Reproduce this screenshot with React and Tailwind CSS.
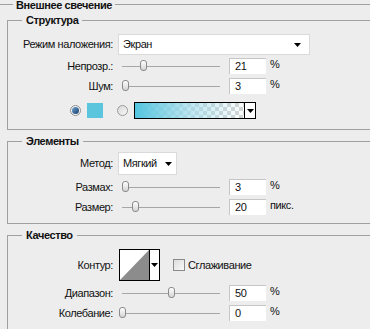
import React from "react";

function Arrow({ className = "" }) {
  return (
    <svg width="7" height="4" viewBox="0 0 7 4" className={className}>
      <polygon points="0,0 7,0 3.5,4" fill="#000" />
    </svg>
  );
}

function Group({ title, className, children }) {
  return (
    <div className={"ml-[7px] border-l border-t border-b border-[#a0a0a0] " + className}>
      <div className="-mt-[7px] flex">
        <span className="ml-[14px] px-[4px] bg-[#ededed] font-bold leading-[13px]">{title}</span>
      </div>
      {children}
    </div>
  );
}

function Label({ children }) {
  return <div className="w-[105px] shrink-0 text-right">{children}</div>;
}

function Input({ value }) {
  return (
    <div className="ml-[9px] w-[37px] h-[16px] bg-white border-t border-l border-[#c6c6c6] pl-[5px] flex items-center">
      {value}
    </div>
  );
}

function SliderRow({ label, pos, value, unit, className }) {
  return (
    <div className={"flex items-center h-[16px] " + className}>
      <Label>{label}</Label>
      <div className="ml-[9px] w-[98px] h-[16px] relative flex items-center">
        <div className="w-full h-px bg-[#a6a6a6]" />
        <div
          className="absolute top-[2px] w-[7px] h-[11px] rounded-[3px] border border-[#8a8a8a] bg-gradient-to-b from-white to-[#d4d4d4]"
          style={{ left: pos - 122 - 3.5 }}
        />
      </div>
      <Input value={value} />
      <div className="ml-[4px] mb-[4px]">{unit}</div>
    </div>
  );
}

export default function App() {
  return (
    <div className="w-[370px] h-[329px] overflow-hidden bg-[#ededed] text-[11px] leading-[13px] tracking-[-0.4px] text-[#111] font-['Liberation_Sans',Arial,sans-serif]">
      <div className="pt-[4px]">
        <div className="border-t border-[#a0a0a0]">
          <div className="-mt-[5px] flex">
            <span className="ml-[13px] px-[3px] bg-[#ededed] font-bold leading-[11px]">Внешнее свечение</span>
          </div>

          <Group title="Структура" className="mt-[9px] pb-[10px]">
            <div className="flex items-center mt-[7px] h-[21px]">
              <Label>Режим наложения:</Label>
              <div className="ml-[5px] w-[192px] h-[21px] bg-white border border-[#dadada] flex items-center justify-between pl-[4px] pr-[8px]">
                <span>Экран</span>
                <Arrow />
              </div>
            </div>
            <SliderRow label="Непрозр.:" pos={143} value="21" unit="%" className="mt-[3px]" />
            <SliderRow label="Шум:" pos={125} value="3" unit="%" className="mt-[4px]" />
            <div className="flex items-center mt-[8px] h-[17px]">
              <div className="ml-[62px] w-[11px] h-[11px] rounded-full border border-[#8f8f8f] bg-[#f4f4f4] flex items-center justify-center">
                <div className="w-[7px] h-[7px] rounded-full bg-gradient-to-br from-[#6fa4d4] to-[#163e6b]" />
              </div>
              <div className="ml-[6px] w-[16px] h-[15px] bg-[#5bc5dd]" />
              <div className="ml-[14px] w-[11px] h-[11px] rounded-full border border-[#9a9a9a] bg-gradient-to-br from-[#d8d8d8] to-[#f8f8f8]" />
              <div className="ml-[6px] w-[122px] h-[17px] border border-black flex">
                <div className="flex-1 bg-[repeating-conic-gradient(#d4d4d4_0%_25%,#ffffff_0%_50%)] bg-[length:8px_8px]">
                  <div className="w-full h-full bg-gradient-to-r from-[#52c5df] via-[#9fdcec]/70 to-transparent" />
                </div>
                <div className="w-[11px] border-l border-black bg-white flex items-center justify-center">
                  <Arrow />
                </div>
              </div>
            </div>
          </Group>

          <Group title="Элементы" className="mt-[11px] pb-[8px]">
            <div className="flex items-center mt-[4px] h-[23px]">
              <Label>Метод:</Label>
              <div className="ml-[5px] w-[59px] h-[23px] bg-white border border-[#dadada] flex items-center justify-between pl-[4px] pr-[4px]">
                <span>Мягкий</span>
                <Arrow />
              </div>
            </div>
            <SliderRow label="Размах:" pos={125} value="3" unit="%" className="mt-[4px]" />
            <SliderRow label="Размер:" pos={135} value="20" unit="пикс." className="mt-[4px]" />
          </Group>

          <Group title="Качество" className="mt-[11px] pb-[20px]">
            <div className="flex items-center mt-[7px] h-[32px]">
              <Label>Контур:</Label>
              <div className="ml-[6px] w-[41px] h-[32px] border border-black flex">
                <svg width="29" height="30" viewBox="0 0 29 30" className="bg-white">
                  <polygon points="0,30 29,30 29,0" fill="#8c8c8c" />
                </svg>
                <div className="flex-1 border-l border-black bg-white flex items-center justify-center">
                  <Arrow />
                </div>
              </div>
              <div className="ml-[13px] w-[12px] h-[12px] border border-[#8a8a8a] bg-gradient-to-br from-[#dcdcdc] to-[#fafafa]" />
              <div className="ml-[3px]">Сглаживание</div>
            </div>
            <SliderRow label="Диапазон:" pos={171} value="50" unit="%" className="mt-[4px]" />
            <SliderRow label="Колебание:" pos={122} value="0" unit="%" className="mt-[4px]" />
          </Group>
        </div>
      </div>
    </div>
  );
}
